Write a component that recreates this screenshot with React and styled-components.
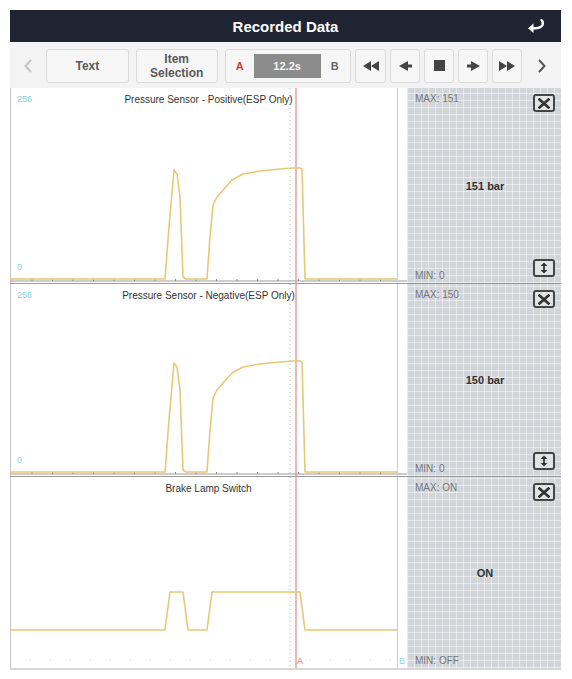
import React from "react";
import styled, { createGlobalStyle } from "styled-components";

const Global = createGlobalStyle`
  html, body { margin: 0; padding: 0; background: #fff; }
  body { font-family: "Liberation Sans", Arial, sans-serif; }
`;

const Page = styled.div`
  padding: 10px 0 0 10px;
  width: 572px;
  height: 679px;
  box-sizing: border-box;
`;

const Frame = styled.div`
  width: 551px;
  display: flex;
  flex-direction: column;
  border-bottom: 2px solid #d6d6d6;
`;

const Header = styled.div`
  height: 32px;
  background: #1e2431;
  display: flex;
  align-items: center;
  justify-content: center;
  position: relative;
  color: #fff;
  font-weight: bold;
  font-size: 15px;
`;

const BackIcon = styled.svg`
  position: absolute;
  right: 15px;
  top: 8px;
`;

const Toolbar = styled.div`
  height: 46px;
  background: #f3f3f3;
  display: flex;
  align-items: center;
  box-sizing: border-box;
  padding-top: 1px;
`;

const Chevron = styled.div`
  width: ${(p) => p.$w}px;
  display: flex;
  justify-content: center;
  align-items: center;
  color: ${(p) => p.$c};
`;

const Btn = styled.div`
  width: ${(p) => p.$w}px;
  height: 34px;
  margin-right: ${(p) => p.$mr ?? 4}px;
  box-sizing: border-box;
  border: 1px solid #dadada;
  border-radius: 3px;
  background: #f6f6f6;
  display: flex;
  align-items: center;
  justify-content: ${(p) => p.$jc || "center"};
  text-align: center;
  font-size: 12px;
  font-weight: bold;
  color: #5a5a5a;
  line-height: 14px;
`;

const Mark = styled.span`
  width: 28px;
  text-align: center;
  font-size: 11px;
  font-weight: bold;
  color: ${(p) => p.$c};
`;

const TimeBox = styled.div`
  width: 67px;
  height: 24px;
  background: #8c8c8c;
  color: #f2f2f2;
  font-size: 11px;
  font-weight: bold;
  display: flex;
  align-items: center;
  justify-content: center;
`;

const Body = styled.div`
  display: flex;
  flex-direction: column;
`;

const Row = styled.div`
  display: flex;
  height: ${(p) => p.$h}px;
  border-top: ${(p) => (p.$first ? "none" : "1px solid #9a9a9a")};
`;

const ChartArea = styled.div`
  width: 397px;
  position: relative;
  background: #fff;
`;

const ChartTitle = styled.div`
  position: absolute;
  top: 6px;
  left: 0;
  right: 0;
  text-align: center;
  font-size: 10px;
  color: #333;
`;

const ScaleLabel = styled.div`
  position: absolute;
  left: 7px;
  top: ${(p) => p.$top}px;
  font-size: 9px;
  color: #7fd4d8;
`;

const CursorLabel = styled.div`
  position: absolute;
  left: ${(p) => p.$left}px;
  bottom: 2px;
  font-size: 9px;
  color: ${(p) => p.$c};
`;

const Side = styled.div`
  width: 154px;
  position: relative;
  background-color: #d2d5da;
  background-image:
    repeating-linear-gradient(0deg, rgba(255,255,255,0.45) 0 1px, transparent 1px 7px),
    repeating-linear-gradient(90deg, rgba(255,255,255,0.45) 0 1px, transparent 1px 7px);
  display: flex;
  align-items: center;
  justify-content: center;
`;

const SideText = styled.div`
  position: absolute;
  left: 8px;
  ${(p) => (p.$bottom ? "bottom: 2px;" : "top: 5px;")}
  font-size: 10px;
  color: #777;
`;

const Value = styled.div`
  font-size: 11px;
  font-weight: bold;
  color: #333;
  margin-left: 2px;
`;

const IconBtn = styled.div`
  position: absolute;
  right: 6px;
  ${(p) => (p.$bottom ? "bottom: 6px;" : "top: 6px;")}
  width: 22px;
  height: 18px;
  box-sizing: border-box;
  border: 2px solid #454545;
  border-radius: 3px;
  background: #e2e4e7;
  display: flex;
  align-items: center;
  justify-content: center;
`;

const W = 397;
const SIG = "#e8c877";

function Wave({ h, kind }) {
  const base = h - 3;
  let pts;
  if (kind === "switch") {
    const lo = h - 38, hi = h - 76;
    pts = [[0, lo], [155, lo], [160, hi], [173, hi], [178, lo], [197, lo], [202, hi], [290, hi], [295, lo], [387, lo]];
  } else {
    const b = base - 1;
    const r = (d) => b - d;
    pts = [[0, b], [155, b], [159, r(52)], [164, r(109)], [167, r(105)], [170, r(82)], [173, r(2)], [176, b], [197, b], [200, r(42)], [203, r(74)], [207, r(82)], [213, r(89)], [222, r(99)], [233, r(105)], [250, r(108)], [270, r(110)], [283, r(111)], [290, r(111)], [292, r(110)], [295, b], [308, b], [387, b]];
  }
  const d = pts.map((p, i) => (i ? "L" : "M") + p[0] + " " + p[1]).join(" ");
  const ticks = [];
  for (let x = 22; x < 390; x += 20.5) ticks.push(x);
  return (
    <svg width={W} height={h} style={{ position: "absolute", left: 0, top: 0 }}>
      <line x1="0.5" y1="0" x2="0.5" y2={h} stroke="#c8c8c8" />
      <line x1="280" y1="0" x2="280" y2={h} stroke="#bbb" strokeDasharray="1 3" />
      {kind === "switch" && (
        <line x1="0" y1={h - 8} x2={W - 10} y2={h - 8} stroke="#ccc" strokeDasharray="1 19" />
      )}
      {kind !== "switch" && (
        <>
          <line x1="0" y1={base + 1} x2={W} y2={base + 1} stroke="#9a9a9a" />
          {ticks.map((x) => (
            <line key={x} x1={x} y1={base - 1} x2={x} y2={base + 1} stroke="#888" />
          ))}
        </>
      )}
      <line x1="387.5" y1="0" x2="387.5" y2={h} stroke="#9fe0e3" />
      <line x1="286" y1="0" x2="286" y2={h} stroke="#e08a86" strokeWidth="1.2" />
      <path d={d} fill="none" stroke={SIG} strokeWidth="1.6" strokeLinejoin="round" />
    </svg>
  );
}

const CloseIcon = () => (
  <svg width="12" height="11" viewBox="0 0 12 11">
    <path d="M1.5 1.5 L10.5 9.5 M10.5 1.5 L1.5 9.5" stroke="#333" strokeWidth="2.6" strokeLinecap="square" />
  </svg>
);

const UpDownIcon = () => (
  <svg width="10" height="12" viewBox="0 0 10 12">
    <path d="M5 2 V10" stroke="#333" strokeWidth="1.8" />
    <path d="M1.5 4 L5 0.5 L8.5 4 Z M1.5 8 L5 11.5 L8.5 8 Z" fill="#333" />
  </svg>
);

function ChartRow({ h, first, title, kind, max, min, value }) {
  return (
    <Row $h={h} $first={first}>
      <ChartArea>
        <Wave h={h} kind={kind} />
        <ChartTitle>{title}</ChartTitle>
        {kind !== "switch" && (
          <>
            <ScaleLabel $top={6}>256</ScaleLabel>
            <ScaleLabel $top={h - 21}>0</ScaleLabel>
          </>
        )}
        {kind === "switch" && (
          <>
            <CursorLabel $left={287} $c="#e0605a">A</CursorLabel>
            <CursorLabel $left={389} $c="#8fdde0">B</CursorLabel>
          </>
        )}
      </ChartArea>
      <Side>
        <SideText>{max}</SideText>
        <IconBtn>
          <CloseIcon />
        </IconBtn>
        <Value>{value}</Value>
        <SideText $bottom>{min}</SideText>
        {kind !== "switch" && (
          <IconBtn $bottom>
            <UpDownIcon />
          </IconBtn>
        )}
      </Side>
    </Row>
  );
}

export default function App() {
  return (
    <Page>
      <Global />
      <Frame>
        <Header>
          Recorded Data
          <BackIcon width="20" height="16" viewBox="0 0 20 16">
            <path d="M15.5 2 Q17.5 4 16.5 7 Q15 10 10 10.2 H6" fill="none" stroke="#fff" strokeWidth="2.4" strokeLinecap="round" />
            <path d="M7.5 5.5 L2 10.3 L7.5 15 Z" fill="#fff" />
          </BackIcon>
        </Header>
        <Toolbar>
          <Chevron $w={36} $c="#c4c4c4">
            <svg width="8" height="14" viewBox="0 0 8 14">
              <path d="M7 1 L1.5 7 L7 13" fill="none" stroke="#c4c4c4" strokeWidth="2" />
            </svg>
          </Chevron>
          <Btn $w={83} $mr={7}>Text</Btn>
          <Btn $w={82} $mr={7}>
            Item
            <br />
            Selection
          </Btn>
          <Btn $w={127} $jc="flex-start">
            <Mark $c="#d23a33">A</Mark>
            <TimeBox>12.2s</TimeBox>
            <Mark $c="#666">B</Mark>
          </Btn>
          <Btn $w={31}>
            <svg width="16" height="10" viewBox="0 0 16 10" fill="#444">
              <path d="M8 0 L0 5 L8 10 Z M16 0 L8 5 L16 10 Z" />
            </svg>
          </Btn>
          <Btn $w={30}>
            <svg width="13" height="10" viewBox="0 0 13 10" fill="#444">
              <path d="M9 0 L0 5 L9 10 Z" />
              <rect x="8" y="3.5" width="5" height="3" />
            </svg>
          </Btn>
          <Btn $w={30}>
            <svg width="11" height="11" viewBox="0 0 11 11">
              <rect width="11" height="11" fill="#444" />
            </svg>
          </Btn>
          <Btn $w={30}>
            <svg width="13" height="10" viewBox="0 0 13 10" fill="#444">
              <path d="M4 0 L13 5 L4 10 Z" />
              <rect x="0" y="3.5" width="5" height="3" />
            </svg>
          </Btn>
          <Btn $w={30} $mr={0}>
            <svg width="16" height="10" viewBox="0 0 16 10" fill="#444">
              <path d="M0 0 L8 5 L0 10 Z M8 0 L16 5 L8 10 Z" />
            </svg>
          </Btn>
          <Chevron $w={39} $c="#555">
            <svg width="8" height="14" viewBox="0 0 8 14">
              <path d="M1 1 L6.5 7 L1 13" fill="none" stroke="#555" strokeWidth="2" />
            </svg>
          </Chevron>
        </Toolbar>
        <Body>
          <ChartRow h={195} first title="Pressure Sensor - Positive(ESP Only)" kind="p" max="MAX: 151" min="MIN: 0" value="151 bar" />
          <ChartRow h={192} title="Pressure Sensor - Negative(ESP Only)" kind="p" max="MAX: 150" min="MIN: 0" value="150 bar" />
          <ChartRow h={191} title="Brake Lamp Switch" kind="switch" max="MAX: ON" min="MIN: OFF" value="ON" />
        </Body>
      </Frame>
    </Page>
  );
}
